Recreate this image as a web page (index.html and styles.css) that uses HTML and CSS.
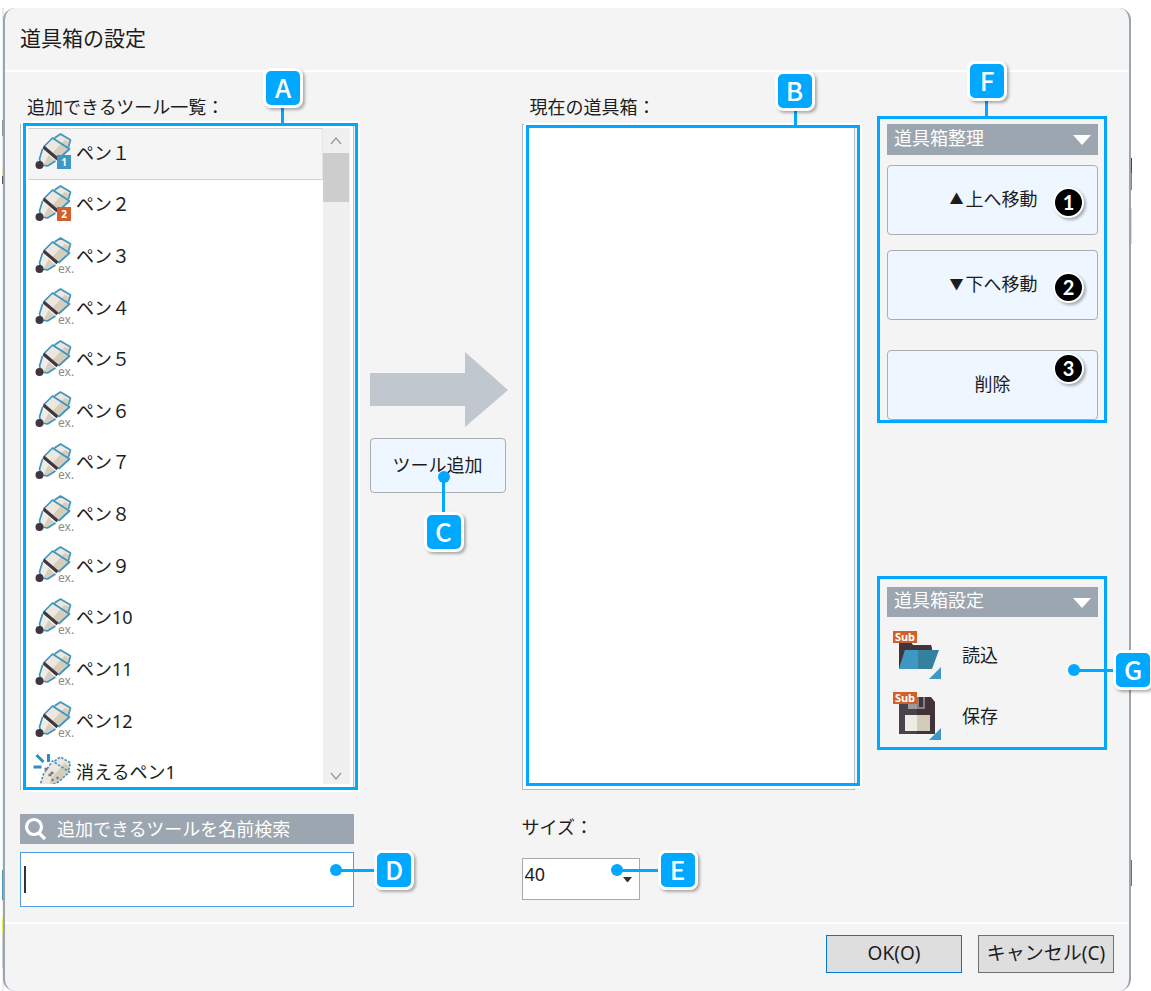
FILE: index.html
```html
<!DOCTYPE html>
<html lang="ja">
<head>
<meta charset="utf-8">
<title>道具箱の設定</title>
<link rel="stylesheet" href="styles.css">
</head>
<body>
<svg class="defs" aria-hidden="true">
  <symbol id="marker" viewBox="0 0 40 37" overflow="visible">
    <path d="M7 15 20 27 12 32 7 31 4 25Z" fill="#efece6"/>
    <path d="M13 21 20 27 12 32 8 31Z" fill="#d6cfbf"/>
    <path d="M8 13 17 4 19 3 25 0 35 6 33 11 34 15 23 25Z" fill="#ece8df"/>
    <path d="M16 20 29 6 34 8 33 11 34 15 23 25Z" fill="#d6cebb"/>
    <path d="M8 13 17 4 34 15 23 25M19 4 25 0 35 6 33 13M7 15 4 25 6 31 12 32 20 27" fill="none" stroke="#3f95bf" stroke-width="1.7" stroke-linejoin="round"/>
    <path d="M8 13 22 25" stroke="#40363d" stroke-width="3.2"/>
    <circle cx="4" cy="31" r="4" fill="#40363d"/>
  </symbol>
  <symbol id="vanish" viewBox="0 0 40 37" overflow="visible">
    <path d="M4 33 8 20 17 8 25 3 35 9 34 18 23 28 15 33Z" fill="#ece8df"/>
    <path d="M16 24 29 9 34 12 34 18 23 28 13 33Z" fill="#d6cebb"/>
    <path d="M4 33 8 20 17 7 34 18 23 28 12 33M19 7 25 3 35 9 33 16" fill="none" stroke="#3f95bf" stroke-width="1.6" stroke-dasharray="2.5 1.5"/>
    <path d="m1 1 7 7M13 0v8M-2 13h8" stroke="#2e8fc0" stroke-width="3" fill="none"/>
    <path d="M9 15h3m3 4h3m3 5h2m-7 2h2m-5-5h3m-11 11h6" stroke="#77747c" stroke-width="2.5"/>
  </symbol>
</svg>
<div class="desktop">
<main class="dialog">
  <header class="dialog-head"><h1>道具箱の設定</h1></header>
  <div class="content">
    <section class="column">
      <h2 class="caption">追加できるツール一覧：</h2>
      <div class="listbox">
        <ul class="tools" role="listbox" aria-label="追加できるツール一覧">
          <li class="tool selected"><svg class="pen"><use href="#marker"/><rect x="22" y="21" width="14" height="14" fill="#3f97c3"/><text class="num" x="29" y="32">1</text></svg>ペン１</li>
          <li class="tool"><svg class="pen"><use href="#marker"/><rect x="22" y="21" width="14" height="14" fill="#d2602a"/><text class="num" x="29" y="32">2</text></svg>ペン２</li>
          <li class="tool"><svg class="pen"><use href="#marker"/><text class="ex" x="23" y="35">ex.</text></svg>ペン３</li>
          <li class="tool"><svg class="pen"><use href="#marker"/><text class="ex" x="23" y="35">ex.</text></svg>ペン４</li>
          <li class="tool"><svg class="pen"><use href="#marker"/><text class="ex" x="23" y="35">ex.</text></svg>ペン５</li>
          <li class="tool"><svg class="pen"><use href="#marker"/><text class="ex" x="23" y="35">ex.</text></svg>ペン６</li>
          <li class="tool"><svg class="pen"><use href="#marker"/><text class="ex" x="23" y="35">ex.</text></svg>ペン７</li>
          <li class="tool"><svg class="pen"><use href="#marker"/><text class="ex" x="23" y="35">ex.</text></svg>ペン８</li>
          <li class="tool"><svg class="pen"><use href="#marker"/><text class="ex" x="23" y="35">ex.</text></svg>ペン９</li>
          <li class="tool"><svg class="pen"><use href="#marker"/><text class="ex" x="23" y="35">ex.</text></svg>ペン10</li>
          <li class="tool"><svg class="pen"><use href="#marker"/><text class="ex" x="23" y="35">ex.</text></svg>ペン11</li>
          <li class="tool"><svg class="pen"><use href="#marker"/><text class="ex" x="23" y="35">ex.</text></svg>ペン12</li>
          <li class="tool"><svg class="pen"><use href="#vanish"/></svg>消えるペン1</li>
        </ul>
        <div class="scrollbar">
          <svg class="chevron" viewBox="0 0 12 8"><path d="m1 7 5-6 5 6"/></svg>
          <div class="thumb"></div>
          <svg class="chevron end" viewBox="0 0 12 8"><path d="m1 1 5 6 5-6"/></svg>
        </div>
        <div class="frame frame-a"></div>
        <div class="lead lead-a"></div>
        <b class="tag tag-a">A</b>
      </div>
      <label class="bar search-label" for="search">
        <svg class="glass" viewBox="0 0 24 24"><circle cx="10" cy="10" r="7.5"/><path d="m15 16 6 6"/></svg>
        追加できるツールを名前検索
      </label>
      <div class="search-wrap">
        <input class="search" id="search" type="text">
        <span class="caret"></span>
        <span class="dot dot-d"></span><div class="lead lead-d"></div>
        <b class="tag tag-d">D</b>
      </div>
    </section>

    <section class="transfer">
      <svg class="arrow" viewBox="0 0 138 75"><path d="M0 21h95V0l43 38-43 37V54H0Z" fill="#c1c7cf"/></svg>
      <div class="anchor">
        <button class="push add" type="button">ツール追加</button>
        <span class="dot dot-c"></span><div class="lead lead-c"></div>
        <b class="tag tag-c">C</b>
      </div>
    </section>

    <section class="column">
      <h2 class="caption second">現在の道具箱：</h2>
      <div class="listbox">
        <div class="frame frame-b"></div>
        <div class="lead lead-b"></div>
        <b class="tag tag-b">B</b>
      </div>
      <label class="size-label" for="size">サイズ：</label>
      <div class="size-wrap">
        <select class="size" id="size"><option>40</option></select>
        <svg class="drop" viewBox="0 0 9 5"><path d="M0 0h9L5 5H4Z" fill="#333"/></svg>
        <span class="dot dot-e"></span><div class="lead lead-e"></div>
        <b class="tag tag-e">E</b>
      </div>
    </section>

    <section class="side">
      <div class="panel order">
        <button class="bar fold" type="button">道具箱整理<svg class="tri" viewBox="0 0 18 10"><path d="M0 0h18L9 10Z" fill="#fff"/></svg></button>
        <div class="anchor"><button class="push move" type="button"><span class="mark">▲</span>上へ移動</button><b class="step">1</b></div>
        <div class="anchor"><button class="push move" type="button"><span class="mark">▼</span>下へ移動</button><b class="step">2</b></div>
        <div class="anchor remove"><button class="push move" type="button">削除</button><b class="step high">3</b></div>
        <div class="lead lead-f"></div>
        <b class="tag tag-f">F</b>
      </div>
      <div class="panel config">
        <button class="bar fold" type="button">道具箱設定<svg class="tri" viewBox="0 0 18 10"><path d="M0 0h18L9 10Z" fill="#fff"/></svg></button>
        <button class="file" type="button">
          <svg class="file-icon" viewBox="0 0 49 49">
            <path d="M6 12h12l2 3h18l1 3v21H6Z" fill="#40353c"/>
            <path d="M12 20h34l-7 19H6Z" fill="#35809d"/><path d="M12 20h13v19H6Z" fill="#3f97c3"/>
            <path d="M48 37v12H36Z" fill="#3f97c3"/>
            <rect y="1" width="24" height="12" fill="#d2602a"/><text class="sub" x="12" y="11">Sub</text>
          </svg>読込</button>
        <button class="file" type="button">
          <svg class="file-icon" viewBox="0 0 49 49">
            <path d="M6 6h32l4 5v32H6Z" fill="#40343a"/><path d="M6 6h18v37H6Z" fill="#4a424b"/>
            <path d="M15 6h9v12h-9Z" fill="#9d9a9c"/><path d="M24 6h8v12h-8Z" fill="#858083"/><path d="M26 6h4v10h-4Z" fill="#40343a"/>
            <path d="M12 24h12v16H12Z" fill="#eeeae6"/><path d="M24 24h13v16H24Z" fill="#d3cbb9"/>
            <path d="M48 37v12H36Z" fill="#3f97c3"/>
            <rect y="1" width="24" height="12" fill="#d2602a"/><text class="sub" x="12" y="11">Sub</text>
          </svg>保存</button>
        <span class="dot dot-g"></span><div class="lead lead-g"></div>
        <b class="tag tag-g">G</b>
      </div>
    </section>
  </div>
  <footer class="dialog-foot">
    <button class="answer ok" type="button">OK(O)</button>
    <button class="answer" type="button">キャンセル(C)</button>
  </footer>
</main>
</div>
</body>
</html>
```

FILE: styles.css
```css
* { box-sizing: border-box; }
html { overflow: hidden; }
body, button, input, select {
  font-family: "Noto Sans", "Noto Sans CJK JP", sans-serif;
  font-size: 18px;
  color: #1c1c1c;
}
body { margin: 0; padding-top: 8px; background: #fff; line-height: 26px; overflow: hidden; }
h1, h2, ul { margin: 0; padding: 0; font-weight: 400; }
button { margin: 0; padding: 0; line-height: 26px; }
svg { display: block; flex: none; }
.defs { position: absolute; width: 0; height: 0; }

/* strip of the desktop seen round the dialog's edges */
.desktop {
  margin: 0 19px 0 2px;
  padding: 0 1px;
  background: linear-gradient(#e6edf1 0 112px, #8d9499 112px 128px, #dfe4e7 128px 162px, #e8dc9c 162px 168px, #555 168px 176px, #eef1f3 176px 862px, #4898bd 862px 892px, #eef1f3 892px 910px, #e9ee5b 910px 926px, #c9cdd0 926px 960px, #eee 960px) left / 2px 100% no-repeat,
    linear-gradient(#fff 0 150px, #3b4a52 150px 165px, #3f97c3 165px 182px, #fff 182px 200px, #e9ee5b 200px 216px, #d6dbe0 216px 236px, #fff 236px 852px, #4a7c96 852px 878px, #fff 878px) right / 1px 100% no-repeat;
}
.dialog {
  min-height: calc(100vh - 8px);
  border: solid #9ba5b0;
  border-width: 0 2px;
  border-radius: 12px;
  background: #f4f4f4;
}
.dialog-head { padding: 17px 15px 19px; border-bottom: 2px solid #fff; }
h1 { font-size: 21px; line-height: 26px; }
.content {
  display: grid;
  grid-template-columns: minmax(0, 1fr) 136px minmax(0, 1fr) 235px;
  column-gap: 16px;
  padding: 0 23px 15px 15px;
}
.column { padding-top: 22px; }
.caption { margin-bottom: 4px; padding-left: 7px; font-size: 18px; }
.caption.second { padding-left: 8px; }
.listbox {
  position: relative;
  display: flex;
  height: 666px;
  padding: 3px 3px 5px 7px;
  border: 1px solid #b9bbc0;
  background: #fff;
}
.tools {
  flex: 1;
  display: grid;
  grid-template-rows: repeat(13, 1fr);
  height: 671px;
  list-style: none;
  clip-path: inset(0 0 15px 0);
}
.tool { display: flex; align-items: center; padding: 0 7px 2px; border: 1px solid transparent; border-left: 0; }
.tool.selected { background: #f5f5f5; border-color: #d2d2d2; }
.pen { width: 41px; height: 37px; overflow: visible; }
.pen use { width: 40px; height: 37px; }
.num { font-size: 10px; font-weight: 700; fill: #fff; text-anchor: middle; }
.ex { font-size: 12px; fill: #8c8c8c; }
.scrollbar {
  display: flex;
  flex-direction: column;
  align-items: center;
  width: 27px;
  padding: 9px 0 4px;
  background: #f0f0f0;
}
.chevron { width: 12px; height: 8px; fill: none; stroke: #a0a0a0; stroke-width: 1.5; }
.chevron.end { margin-top: auto; }
.thumb { width: 26px; height: 49px; margin-top: 8px; background: #cdcdcd; }

.bar { display: flex; align-items: center; color: #fff; background: #9ca6b0; border: 0; }
.search-label { margin: 24px 0 8px; height: 30px; gap: 9px; padding-left: 4px; }
.glass { width: 24px; height: 24px; fill: none; stroke: #fff; stroke-width: 3.2; }
.search-wrap, .size-wrap, .anchor { position: relative; }
.search { display: block; width: 100%; height: 55px; padding: 0 6px; border: 1px solid #4f9be6; background: #fff; outline: 0; }
.caret { position: absolute; left: 4px; top: 14px; width: 2px; height: 27px; background: #333; }

.transfer { padding-top: 280px; }
.arrow { width: 138px; height: 75px; margin-bottom: 11px; }
.push { width: 100%; padding-bottom: 2px; border: 1px solid #a9acb0; border-radius: 4px; background: #eef6ff; }
.add { height: 55px; }

.size-label { display: block; margin: 24px 0 18px; }
.size-wrap { width: 118px; }
.size { display: block; width: 100%; height: 42px; padding: 0 2px 10px; border: 1px solid #a9a9a9; border-radius: 0; background: #fff; appearance: none; }
.drop { position: absolute; right: 8px; top: 19px; width: 9px; height: 5px; }

.side { margin-right: -1px; padding: 44px 0 0 6px; }
.panel { position: relative; display: flex; flex-direction: column; border: 3px solid #00a8ff; padding: 5px 6px 0 7px; }
.fold { width: 100%; height: 31px; padding: 0 7px 4px; justify-content: space-between; }
.tri { width: 18px; height: 10px; margin-top: 5px; }
.order { gap: 15px; }
.order .fold { margin-bottom: -5px; }
.move { display: block; height: 70px; }
.mark { display: inline-block; width: 18px; font-size: 14px; vertical-align: top; }
.remove { margin-top: 15px; }
.config { margin-top: 153px; padding-top: 8px; }
.config .fold { height: 30px; margin-bottom: 8px; }
.file { display: flex; align-items: center; gap: 20px; height: 61px; padding: 0 0 2px 6px; border: 0; background: none; }
.file-icon { width: 49px; height: 49px; }
.sub { font-size: 11px; font-weight: 700; fill: #fff; text-anchor: middle; }

.dialog-foot { display: flex; justify-content: flex-end; gap: 16px; padding: 11px 15px 18px; border-top: 2px solid #fff; }
.answer { width: 136px; height: 38px; padding-bottom: 2px; border: 1px solid #707070; background: #dedede; font-size: 19px; }
.answer.ok { border-color: #0078d7; }

/* callouts laid over the dialog */
.frame { position: absolute; border: 3px solid #00a8ff; box-shadow: 0 0 0 2px #fff; }
.frame-a { inset: -2px -5px -1px 2px; }
.frame-b { inset: 0 -6px 3px 3px; }
.tag {
  position: absolute;
  width: 40px;
  height: 40px;
  border: 3px solid #fff;
  border-radius: 8px;
  background: #00a8ff;
  box-shadow: 2px 2px 3px rgb(0 0 0 / 30%);
  color: #fff;
  font: 500 26px/32px "Noto Sans CJK JP", sans-serif;
  text-align: center;
}
.lead { position: absolute; background: #00a8ff; }
.dot { position: absolute; width: 12px; height: 12px; border-radius: 50%; background: #00a8ff; }
.tag-a { left: 242px; top: -57px; }
.lead-a { left: 260px; top: -18px; width: 3px; height: 18px; }
.tag-b { left: 252px; top: -54px; }
.lead-b { left: 271px; top: -15px; width: 3px; height: 17px; }
.tag-c { left: 54px; top: 74px; }
.lead-c { left: 72px; top: 38px; width: 3px; height: 36px; }
.dot-c { left: 68px; top: 33px; }
.tag-d { left: 354px; top: -2px; }
.lead-d { left: 315px; top: 17px; width: 40px; height: 3px; }
.dot-d { left: 310px; top: 12px; }
.tag-e { left: 136px; top: -8px; }
.lead-e { left: 95px; top: 11px; width: 42px; height: 3px; }
.dot-e { left: 89px; top: 6px; }
.tag-f { left: 87px; top: -58px; }
.lead-f { left: 105px; top: -19px; width: 3px; height: 18px; }
.tag-g { left: 233px; top: 71px; }
.lead-g { left: 194px; top: 90px; width: 40px; height: 3px; }
.dot-g { left: 188px; top: 85px; }
.step {
  position: absolute;
  right: 14px;
  top: 22px;
  width: 31px;
  height: 31px;
  border: 2px solid #fff;
  border-radius: 50%;
  background: #000;
  box-shadow: 2px 2px 3px rgb(0 0 0 / 30%);
  color: #fff;
  font: 700 20px/26px Lato, sans-serif;
  text-align: center;
}
.step.high { top: 3px; }
```
